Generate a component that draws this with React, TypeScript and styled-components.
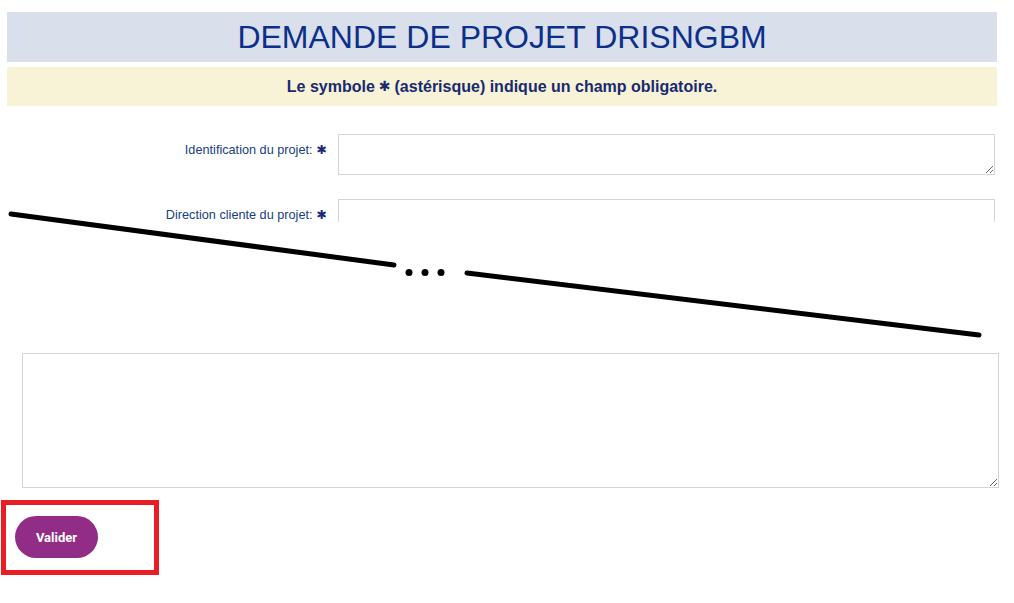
import React from "react";
import styled, { createGlobalStyle } from "styled-components";

const Global = createGlobalStyle`
  html, body { margin: 0; padding: 0; background: #ffffff; }
  body { font-family: "Liberation Sans", Arial, sans-serif; }
  * { box-sizing: border-box; }
`;

const Page = styled.div`
  position: relative;
  width: 1014px;
  height: 603px;
  padding-top: 12px;
  overflow: hidden;
`;

const TitleBanner = styled.header`
  margin: 0 17px 0 7px;
  height: 50px;
  background: #d9e0ec;
  display: flex;
  align-items: center;
  justify-content: center;
`;

const Title = styled.h1`
  margin: 0;
  font-family: "Liberation Sans", Arial, sans-serif;
  font-weight: 400;
  font-size: 32px;
  line-height: 36px;
  color: #0c2f8b;
  letter-spacing: 0;
`;

const Notice = styled.p`
  margin: 5px 17px 0 7px;
  height: 39px;
  background: #f8f2d6;
  display: flex;
  align-items: center;
  justify-content: center;
  font-family: "Liberation Sans", Arial, sans-serif;
  font-weight: 700;
  font-size: 16px;
  color: #172a72;
`;

const Star = styled.span<{ $size: number }>`
  font-family: "DejaVu Sans", sans-serif;
  font-weight: 700;
  font-size: ${(p) => p.$size}px;
  line-height: 1;
  color: #172a72;
  margin: 0 4px;
  display: inline-block;
  transform: translateY(-1px);
`;

const FormClip = styled.div`
  margin-top: 28px;
  height: 88px;
  overflow: hidden;
  display: flex;
  flex-direction: column;
  gap: 24px;
`;

const Row = styled.div`
  display: flex;
  align-items: flex-start;
  gap: 11px;
`;

const Label = styled.label`
  width: 327px;
  flex: none;
  padding-top: 8px;
  text-align: right;
  font-family: "Liberation Sans", Arial, sans-serif;
  font-size: 12.7px;
  line-height: 16px;
  color: #16407f;
  white-space: nowrap;
`;

const LabelStar = styled.span`
  font-family: "DejaVu Sans", sans-serif;
  font-weight: 700;
  font-size: 12.5px;
  color: #172a72;
  margin-left: 4px;
`;

const Field = styled.textarea<{ $h: number }>`
  width: 657px;
  height: ${(p) => p.$h}px;
  border: 1px solid #d5d5d5;
  border-radius: 0;
  padding: 4px 6px;
  margin: 0;
  font-family: "Liberation Sans", Arial, sans-serif;
  font-size: 13px;
  resize: vertical;
  outline: none;
  display: block;
`;

const Spacer = styled.div`
  height: 131px;
`;

const BigField = styled.textarea`
  display: block;
  margin: 0 0 0 22px;
  width: 977px;
  height: 135px;
  border: 1px solid #d5d5d5;
  border-radius: 0;
  padding: 4px 6px;
  font-family: "Liberation Sans", Arial, sans-serif;
  font-size: 13px;
  resize: vertical;
  outline: none;
`;

const Highlight = styled.div`
  margin: 12px 0 0 1px;
  width: 158px;
  height: 75px;
  border: 5px solid #ea1c24;
  padding: 11px 0 0 9px;
`;

const Button = styled.button`
  width: 83px;
  height: 42px;
  border: none;
  border-radius: 21px;
  background: #912d86;
  color: #ffffff;
  font-family: Roboto, "Liberation Sans", sans-serif;
  font-weight: 700;
  font-size: 13px;
  padding: 0;
  cursor: pointer;
`;

const Annotation = styled.svg`
  position: absolute;
  left: 0;
  top: 0;
  pointer-events: none;
`;

export default function App() {
  return (
    <>
      <Global />
      <Page>
        <TitleBanner>
          <Title>DEMANDE DE PROJET DRISNGBM</Title>
        </TitleBanner>
        <Notice>
          Le symbole<Star $size={14}>✱</Star>(astérisque) indique un champ obligatoire.
        </Notice>
        <FormClip>
          <Row>
            <Label>
              Identification du projet:<LabelStar>✱</LabelStar>
            </Label>
            <Field $h={41} />
          </Row>
          <Row>
            <Label>
              Direction cliente du projet:<LabelStar>✱</LabelStar>
            </Label>
            <Field $h={41} />
          </Row>
        </FormClip>
        <Spacer />
        <BigField />
        <Highlight>
          <Button type="button">Valider</Button>
        </Highlight>
        <Annotation width="1014" height="603" viewBox="0 0 1014 603">
          <g stroke="#000" strokeWidth="5" strokeLinecap="round" fill="none">
            <line x1="11" y1="214" x2="394" y2="265" />
            <line x1="467" y1="273" x2="979" y2="335" />
          </g>
          <g fill="#000">
            <circle cx="409" cy="272.5" r="3.5" />
            <circle cx="425" cy="272.5" r="3.5" />
            <circle cx="441" cy="272.5" r="3.5" />
          </g>
        </Annotation>
      </Page>
    </>
  );
}
